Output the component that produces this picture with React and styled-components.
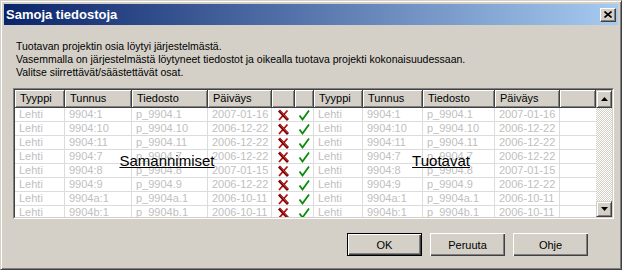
import styled, { createGlobalStyle } from 'styled-components'

const GlobalStyle = createGlobalStyle`
  body {
    margin: 0;
    background: #fff;
    font-family: "Liberation Sans", Arial, sans-serif;
  }
`

const Window = styled.div`
  width: 622px;
  height: 270px;
  box-sizing: border-box;
  background: #d4d0c8;
  border: 1px solid;
  border-color: #d4d0c8 #404040 #404040 #d4d0c8;
  box-shadow: inset 1px 1px #fff, inset -1px -1px #808080;
  padding: 3px;
  display: flex;
  flex-direction: column;
`

const TitleBar = styled.div`
  height: 21px;
  display: flex;
  align-items: center;
  justify-content: space-between;
  padding: 0 2px 0 2px;
  background: linear-gradient(to right, #0a246a, #a6caf0);
`

const TitleText = styled.span`
  color: #fff;
  font-weight: bold;
  font-size: 13px;
`

const CloseButton = styled.div`
  width: 16px;
  height: 14px;
  box-sizing: border-box;
  background: #d4d0c8;
  border: 1px solid;
  border-color: #fff #404040 #404040 #fff;
  box-shadow: inset -1px -1px #808080;
  display: flex;
  align-items: center;
  justify-content: center;
`

const Content = styled.div`
  flex: 1;
  display: flex;
  flex-direction: column;
  padding: 15px 4px 0 9px;
`

const Message = styled.div`
  font-size: 10.5px;
  line-height: 13px;
  color: #000;
  padding-left: 3px;
`

const Frame = styled.div`
  position: relative;
  margin-top: 9px;
  width: 601px;
  height: 131px;
  box-sizing: border-box;
  border: 1px solid;
  border-color: #808080 #fff #fff #808080;
`

const FrameInner = styled.div`
  height: 100%;
  box-sizing: border-box;
  border: 1px solid;
  border-color: #404040 #d4d0c8 #d4d0c8 #404040;
  display: flex;
  overflow: hidden;
  background: #fff;
`

const Grid = styled.div`
  flex: 1;
  overflow: hidden;
`

const Row = styled.div`
  display: grid;
  grid-template-columns: 50px 67px 76px 64px 23px 19px 49px 60px 72px 65px 1fr;
`

const HeadCell = styled.div`
  box-sizing: border-box;
  height: 18px;
  padding: 0 5px;
  line-height: 16px;
  background: #d4d0c8;
  border-right: 1px solid #404040;
  border-bottom: 1px solid #404040;
  box-shadow: inset 1px 1px #fff, inset -1px -1px #808080;
  font-size: 11px;
  color: #000;
  white-space: nowrap;
  overflow: hidden;
`

const Cell = styled.div`
  box-sizing: border-box;
  height: 14px;
  line-height: 13px;
  font-size: 11px;
  color: #c0c0c0;
  white-space: nowrap;
  overflow: hidden;
  border-bottom: 1px solid #dcdcdc;
  border-right: ${p => (p.$noLine ? 'none' : '1px solid #dcdcdc')};
  display: ${p => (p.$icon ? 'flex' : 'block')};
  align-items: center;
  justify-content: center;
  padding-left: ${p => (p.$icon ? '0' : '4px')};
`

const Scrollbar = styled.div`
  width: 16px;
  display: flex;
  flex-direction: column;
`

const ScrollButton = styled.div`
  height: ${p => p.$h}px;
  box-sizing: border-box;
  background: #d4d0c8;
  border: 1px solid;
  border-color: #d4d0c8 #404040 #404040 #d4d0c8;
  box-shadow: inset 1px 1px #fff, inset -1px -1px #808080;
  display: flex;
  align-items: center;
  justify-content: center;
`

const Track = styled.div`
  flex: 1;
  background: repeating-conic-gradient(#d4d0c8 0 25%, #fff 0 50%) 0 0 / 2px 2px;
`

const OverLabel = styled.span`
  position: absolute;
  top: 63px;
  left: ${p => p.$x}px;
  transform: translateX(-50%);
  font-size: 15px;
  line-height: 17px;
  color: #000;
  text-decoration: underline;
  white-space: nowrap;
`

const ButtonRow = styled.div`
  display: flex;
  justify-content: flex-end;
  gap: 8px;
  margin-top: 14px;
  padding-right: 26px;
`

const Button = styled.button`
  width: 75px;
  height: 23px;
  box-sizing: border-box;
  padding: 0;
  background: #d4d0c8;
  font-family: "Liberation Sans", Arial, sans-serif;
  font-size: 11px;
  color: #000;
  border: ${p => (p.$default ? '1px solid #000' : 'none')};
  box-shadow: inset 1px 1px #fff, inset -1px -1px #404040, inset -2px -2px #808080;
`

const Arrow = ({ down }) => (
  <svg width="7" height="4" viewBox="0 0 7 4">
    <path d={down ? 'M0 0H7L3.5 4Z' : 'M0 4H7L3.5 0Z'} fill="#000" />
  </svg>
)

const CrossIcon = () => (
  <svg width="13" height="12" viewBox="0 0 13 12">
    <path d="M10.5 1.5L2 11" stroke="#b01010" strokeWidth="1.8" fill="none" />
    <path d="M2 1.5L11 11" stroke="#7a0000" strokeWidth="2.8" fill="none" />
    <path d="M3 1.5L10.5 10" stroke="#e05050" strokeWidth="0.8" fill="none" />
  </svg>
)

const CheckIcon = () => (
  <svg width="12" height="12" viewBox="0 0 12 12">
    <path d="M1.5 6.5L4.5 10.5L11 1.5" stroke="#0a8a0a" strokeWidth="1.8" fill="none" />
  </svg>
)

const rows = [
  ['Lehti', '9904:1', 'p_9904.1', '2007-01-16'],
  ['Lehti', '9904:10', 'p_9904.10', '2006-12-22'],
  ['Lehti', '9904:11', 'p_9904.11', '2006-12-22'],
  ['Lehti', '9904:7', 'p_9904.7', '2006-12-22'],
  ['Lehti', '9904:8', 'p_9904.8', '2007-01-15'],
  ['Lehti', '9904:9', 'p_9904.9', '2006-12-22'],
  ['Lehti', '9904a:1', 'p_9904a.1', '2006-10-11'],
  ['Lehti', '9904b:1', 'p_9904b.1', '2006-10-11'],
]

const headers = ['Tyyppi', 'Tunnus', 'Tiedosto', 'Päiväys']

export default function App() {
  return (
    <>
      <GlobalStyle />
      <Window>
        <TitleBar>
          <TitleText>Samoja tiedostoja</TitleText>
          <CloseButton>
            <svg width="8" height="7" viewBox="0 0 8 7">
              <path d="M0.5 0.5L7.5 6.5M7.5 0.5L0.5 6.5" stroke="#000" strokeWidth="1.6" />
            </svg>
          </CloseButton>
        </TitleBar>
        <Content>
          <Message>
            Tuotavan projektin osia löytyi järjestelmästä.
            <br />
            Vasemmalla on järjestelmästä löytyneet tiedostot ja oikealla tuotava projekti kokonaisuudessaan.
            <br />
            Valitse siirrettävät/säästettävät osat.
          </Message>
          <Frame>
            <FrameInner>
              <Grid>
                <Row>
                  {headers.map(h => <HeadCell key={'l' + h}>{h}</HeadCell>)}
                  <HeadCell />
                  <HeadCell />
                  {headers.map(h => <HeadCell key={'r' + h}>{h}</HeadCell>)}
                  <HeadCell />
                </Row>
                {rows.map(r => (
                  <Row key={r[1]}>
                    {r.map((v, i) => <Cell key={'l' + i}>{v}</Cell>)}
                    <Cell $icon $noLine><CrossIcon /></Cell>
                    <Cell $icon><CheckIcon /></Cell>
                    {r.map((v, i) => <Cell key={'r' + i}>{v}</Cell>)}
                    <Cell $noLine />
                  </Row>
                ))}
              </Grid>
              <Scrollbar>
                <ScrollButton $h={18}><Arrow /></ScrollButton>
                <Track />
                <ScrollButton $h={16}><Arrow down /></ScrollButton>
              </Scrollbar>
            </FrameInner>
            <OverLabel $x={153}>Samannimiset</OverLabel>
            <OverLabel $x={427}>Tuotavat</OverLabel>
          </Frame>
          <ButtonRow>
            <Button $default>OK</Button>
            <Button>Peruuta</Button>
            <Button>Ohje</Button>
          </ButtonRow>
        </Content>
      </Window>
    </>
  )
}
